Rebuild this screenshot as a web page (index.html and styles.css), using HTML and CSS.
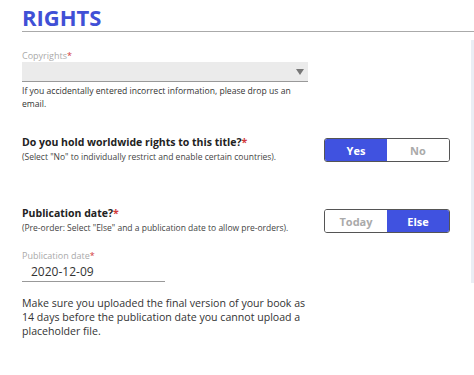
FILE: index.html
```html
<!DOCTYPE html>
<html lang="en">
<head>
    <meta charset="UTF-8">
    <meta name="viewport" content="width=device-width, initial-scale=1.0">
    <title>Rights</title>
    <link rel="stylesheet" href="styles.css">
</head>
<body>
    <h1 class="section-title">RIGHTS</h1>
    <div class="layout">
        <div class="form">
            <label class="field-label">Copyrights<span class="req">*</span></label>
            <div class="select">
                <span class="arrow"></span>
            </div>
            <p class="help">If you accidentally entered incorrect information, please drop us an email.</p>

            <div class="question first">
                <div class="question-text">
                    <div class="question-title">Do you hold worldwide rights to this title?<span class="req">*</span></div>
                    <div class="question-note">(Select "No" to individually restrict and enable certain countries).</div>
                </div>
                <div class="toggle">
                    <button class="active">Yes</button>
                    <button>No</button>
                </div>
            </div>

            <div class="question second">
                <div class="question-text">
                    <div class="question-title">Publication date?<span class="req">*</span></div>
                    <div class="question-note">(Pre-order: Select "Else" and a publication date to allow pre-orders).</div>
                </div>
                <div class="toggle">
                    <button>Today</button>
                    <button class="active">Else</button>
                </div>
            </div>

            <label class="field-label">Publication date<span class="req">*</span></label>
            <div class="date-input">2020-12-09</div>
            <p class="notice">Make sure you uploaded the final version of your book as 14 days before the publication date you cannot upload a placeholder file.</p>
        </div>
        <div class="side-edge"></div>
    </div>
</body>
</html>
```

FILE: styles.css
```css
body {
    margin: 0;
    background-color: #ffffff;
    font-family: "Open Sans", "DejaVu Sans", sans-serif;
    color: #333333;
}

.section-title {
    margin: 0 0 0 22px;
    padding-top: 3px;
    height: 28px;
    line-height: 28px;
    font-size: 22px;
    font-weight: 700;
    color: #4050d6;
    border-bottom: 1.5px solid #aaaaaa;
}

.layout {
    display: flex;
}

.form {
    flex: 1;
    padding: 18px 21px 0 22px;
}

.side-edge {
    width: 3px;
    height: 243px;
    margin-top: 8px;
    background-color: #eaedf4;
}

.field-label {
    display: block;
    font-size: 9px;
    line-height: 12px;
    color: #aaaaaa;
}

.req {
    color: #d23a3a;
}

.select {
    position: relative;
    width: 286px;
    height: 19px;
    background-color: #ebebeb;
    border-bottom: 1.5px solid #999999;
}

.arrow {
    position: absolute;
    right: 4px;
    top: 7px;
    border-left: 4.5px solid transparent;
    border-right: 4.5px solid transparent;
    border-top: 6px solid #777777;
}

.help {
    margin: 3px 0 0;
    width: 290px;
    font-size: 8.6px;
    line-height: 13px;
    color: #333333;
}

.question {
    display: flex;
    justify-content: space-between;
    align-items: flex-start;
}

.question.first {
    margin-top: 24px;
}

.question.second {
    margin-top: 43px;
    margin-bottom: 16px;
}

.question-title {
    font-size: 10.5px;
    line-height: 15px;
    font-weight: 700;
    color: #222222;
}

.question-note {
    margin-top: 1px;
    font-size: 8.5px;
    line-height: 12px;
    color: #444444;
}

.toggle {
    display: flex;
    width: 124px;
    height: 22px;
    margin-top: 3px;
    border: 1.5px solid #555555;
    border-radius: 3px;
    overflow: hidden;
}

.toggle button {
    flex: 1;
    border: none;
    background-color: #ffffff;
    color: #aaaaaa;
    font-family: inherit;
    font-size: 11px;
    font-weight: 700;
    padding: 0;
}

.toggle button.active {
    background-color: #4052e0;
    color: #ffffff;
}

.date-input {
    width: 134px;
    height: 19px;
    padding-left: 9px;
    font-size: 12px;
    line-height: 19px;
    color: #333333;
    border-bottom: 1.5px solid #999999;
}

.notice {
    margin: 14px 0 0;
    width: 290px;
    font-size: 10.6px;
    line-height: 14px;
    color: #333333;
}
```
